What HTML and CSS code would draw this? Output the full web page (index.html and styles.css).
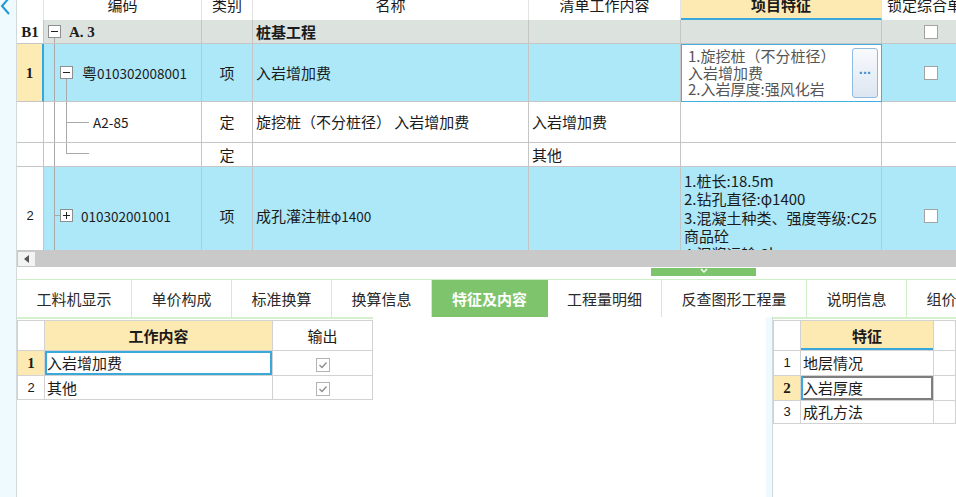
FILE: index.html
```html
<!DOCTYPE html>
<html lang="zh-CN">
<head>
<meta charset="utf-8">
<title>特征及内容</title>
<link rel="stylesheet" href="styles.css">
</head>
<body>
<div class="app">
  <aside class="side">
    <svg class="back" width="12" height="15" viewBox="0 0 12 15"><polyline points="9,-2 2,6 9,14" fill="none" stroke="#1f98d6" stroke-width="2"/></svg>
  </aside>
  <main class="main">
    <section class="sheet">
      <div class="grid">
        <div class="c h"></div>
        <div class="c h">编码</div>
        <div class="c h">类别</div>
        <div class="c h">名称</div>
        <div class="c h">清单工作内容</div>
        <div class="c h hsel">项目特征</div>
        <div class="c h hleft">锁定综合单价</div>

        <div class="c rn rnw serifb">B1</div>
        <div class="c grp t-b1"><span class="tb"></span><span class="serifb">A. 3</span></div>
        <div class="c grp"></div>
        <div class="c grp bold">桩基工程</div>
        <div class="c grp"></div>
        <div class="c grp"></div>
        <div class="c grp ck"><span class="cb"></span></div>

        <div class="c rn cur serifb">1</div>
        <div class="c hi t-1"><span class="tb"></span><span>粤<span class="num">010302008001</span></span></div>
        <div class="c hi ctr">项</div>
        <div class="c hi">入岩增加费</div>
        <div class="c hi"></div>
        <div class="c feat-edit">
          <div class="ftext">1.旋挖桩（不分桩径）<br>入岩增加费<br>2.入岩厚度:强风化岩</div>
          <span class="more">···</span>
        </div>
        <div class="c hi ck"><span class="cb"></span></div>

        <div class="c rn"></div>
        <div class="c t-d1"><span class="num">A2-85</span></div>
        <div class="c ctr">定</div>
        <div class="c">旋挖桩（不分桩径） 入岩增加费</div>
        <div class="c">入岩增加费</div>
        <div class="c"></div>
        <div class="c"></div>

        <div class="c rn"></div>
        <div class="c t-d2"></div>
        <div class="c ctr">定</div>
        <div class="c"></div>
        <div class="c">其他</div>
        <div class="c"></div>
        <div class="c"></div>

        <div class="c rn sans">2</div>
        <div class="c hi t-2"><span class="tb plus"></span><span class="num">010302001001</span></div>
        <div class="c hi ctr">项</div>
        <div class="c hi">成孔灌注桩<span class="num">φ1400</span></div>
        <div class="c hi"></div>
        <div class="c hi feat2">1.桩长:18.5m<br>2.钻孔直径:φ1400<br>3.混凝土种类、强度等级:C25<br>商品砼<br>4.泥浆运输:3km</div>
        <div class="c hi ck"><span class="cb"></span></div>
      </div>
      <div class="hscroll"><span class="sbtn"></span></div>
    </section>

    <div class="hsplit">
      <span class="handle"><svg width="10" height="6" viewBox="0 0 10 6"><polyline points="2,1 5,4 8,1" fill="none" stroke="#fff" stroke-width="1.4"/></svg></span>
    </div>

    <nav class="tabs">
      <span class="tab w115">工料机显示</span>
      <span class="tab w100">单价构成</span>
      <span class="tab w100">标准换算</span>
      <span class="tab w100">换算信息</span>
      <span class="tab w116 on">特征及内容</span>
      <span class="tab w114">工程量明细</span>
      <span class="tab w145">反查图形工程量</span>
      <span class="tab w100">说明信息</span>
      <span class="tab w100">组价方案</span>
    </nav>

    <section class="bottom">
      <div class="pane-l">
        <div class="twrap lw">
          <table class="tbl">
            <colgroup><col class="c27"><col class="c228"><col></colgroup>
            <tr class="th">
              <td></td>
              <td class="yel bold ctr">工作内容</td>
              <td class="ctr">输出</td>
            </tr>
            <tr class="r25">
              <td class="rnum yel serifb">1</td>
              <td class="edit">入岩增加费</td>
              <td class="ctr"><span class="chk"><svg width="12" height="12" viewBox="0 0 12 12"><polyline points="2.5,6 5,8.5 9.5,3.5" fill="none" stroke="#8c8c8c" stroke-width="1.3"/></svg></span></td>
            </tr>
            <tr class="r24">
              <td class="rnum sans">2</td>
              <td>其他</td>
              <td class="ctr"><span class="chk"><svg width="12" height="12" viewBox="0 0 12 12"><polyline points="2.5,6 5,8.5 9.5,3.5" fill="none" stroke="#8c8c8c" stroke-width="1.3"/></svg></span></td>
            </tr>
          </table>
        </div>
      </div>
      <div class="vsplit"></div>
      <div class="pane-r">
        <div class="twrap">
          <table class="tbl rtbl">
            <colgroup><col class="c27"><col class="c133"><col></colgroup>
            <tr class="th">
              <td></td>
              <td class="yel bold ctr bluebot">特征</td>
              <td></td>
            </tr>
            <tr class="r25">
              <td class="rnum sans">1</td>
              <td>地层情况</td>
              <td></td>
            </tr>
            <tr class="r25">
              <td class="rnum yel serifb">2</td>
              <td class="edit2">入岩厚度</td>
              <td></td>
            </tr>
            <tr class="r23">
              <td class="rnum sans">3</td>
              <td>成孔方法</td>
              <td></td>
            </tr>
          </table>
        </div>
      </div>
    </section>
  </main>
</div>
</body>
</html>
```

FILE: styles.css
```css
* { box-sizing: border-box; }
html, body { margin: 0; padding: 0; }
body {
  width: 956px;
  height: 497px;
  overflow: hidden;
  background: #fff;
  font-family: "Noto Sans CJK SC", "Noto Sans", sans-serif;
  font-size: 15px;
  color: #1b1b1b;
}
.app { display: flex; height: 497px; }
.side {
  width: 17px;
  flex: none;
  background: #eefafd;
  border-right: 1px solid #d3d9d9;
}
.back { display: block; }
.main {
  flex: 1;
  min-width: 0;
  display: flex;
  flex-direction: column;
  overflow: hidden;
}

/* ---------- main sheet ---------- */
.sheet { flex: none; overflow: hidden; }
.grid {
  display: grid;
  grid-template-columns: 27px 158px 51px 276px 152px 201px 110px;
  grid-template-rows: 20px 24px 58px 41px 24px 98px;
  width: max-content;
  height: 250px;
  overflow: hidden;
}
.c {
  display: flex;
  align-items: center;
  padding: 0 3px;
  border-right: 1px solid #c5c5c5;
  border-bottom: 1px solid #c5c5c5;
  white-space: nowrap;
  overflow: hidden;
  line-height: 18px;
  background-repeat: no-repeat;
}
.h {
  border-bottom: none;
  border-right-color: #e3e3e3;
  align-items: flex-end;
  justify-content: center;
  padding-bottom: 8px;
  line-height: 15px;
  background: #fff;
}
.hsel {
  background: #fde9b2;
  border-bottom: 2px solid #38a7da;
  padding-bottom: 6px;
  font-weight: bold;
}
.hleft { justify-content: flex-start; padding-left: 5px; }
.bold { font-weight: bold; }
.ctr { justify-content: center; }
.grp { background-color: #dce3df; }
.hi { background-color: #ade8f8; }
.rn { justify-content: center; padding: 0; background: #fff; }
.rn.cur { background: #fdebb4; border-right: 2px solid #34a8dc; }
.serifb { font-family: "Liberation Serif", serif; font-weight: bold; font-size: 15px; }
.sans { font-family: "Liberation Sans", sans-serif; font-size: 13px; }
.num { font-size: 13.5px; }

/* tree boxes and connector lines */
.tb {
  flex: none;
  position: relative;
  width: 13px;
  height: 13px;
  border: 1px solid #8e8e8e;
  background: #fff;
}
.tb::before {
  content: "";
  position: absolute;
  left: 2px;
  right: 2px;
  top: 5px;
  height: 1px;
  background: #222;
}
.tb.plus::after {
  content: "";
  position: absolute;
  top: 2px;
  bottom: 2px;
  left: 5px;
  width: 1px;
  background: #222;
}
.t-b1 {
  padding-left: 4px;
  gap: 8px;
  background-image: linear-gradient(#a9a9a9, #a9a9a9);
  background-position: 10px 18px;
  background-size: 1px 10px;
}
.t-1 {
  padding-left: 16px;
  gap: 9px;
  background-image: linear-gradient(#a9a9a9, #a9a9a9), linear-gradient(#a9a9a9, #a9a9a9);
  background-position: 10px 0, 22px 35px;
  background-size: 1px 100%, 1px 30px;
}
.t-d1 {
  padding-left: 49px;
  background-image: linear-gradient(#a9a9a9, #a9a9a9), linear-gradient(#a9a9a9, #a9a9a9), linear-gradient(#a9a9a9, #a9a9a9);
  background-position: 10px 0, 22px 0, 22px 20px;
  background-size: 1px 100%, 1px 100%, 23px 1px;
}
.t-d2 {
  background-image: linear-gradient(#a9a9a9, #a9a9a9), linear-gradient(#a9a9a9, #a9a9a9), linear-gradient(#a9a9a9, #a9a9a9);
  background-position: 10px 0, 22px 0, 22px 10px;
  background-size: 1px 100%, 1px 10px, 23px 1px;
}
.t-2 {
  padding-left: 16px;
  gap: 8px;
  background-image: linear-gradient(#a9a9a9, #a9a9a9), linear-gradient(#a9a9a9, #a9a9a9);
  background-position: 10px 0, 10px 48px;
  background-size: 1px 100%, 6px 1px;
}

/* feature cells */
.feat-edit {
  background: #fff;
  border: 1px solid #41afe0;
  padding: 0 3px 0 6px;
  justify-content: space-between;
  color: #555;
}
.ftext { line-height: 16.5px; white-space: nowrap; }
.more {
  flex: none;
  width: 26px;
  height: 50px;
  border: 1px solid #8dbbe2;
  border-radius: 3px;
  background: linear-gradient(#f8fafd, #dde6f1);
  color: #3b8fd8;
  display: flex;
  align-items: center;
  justify-content: center;
  font-family: "Liberation Sans", sans-serif;
  font-size: 14px;
  font-weight: bold;
  letter-spacing: -0.5px;
}
.feat2 {
  align-items: flex-start;
  padding-top: 5px;
  line-height: 18.3px;
  display: block;
}
.ck { padding-left: 42px; }
.cb {
  flex: none;
  width: 14px;
  height: 14px;
  border: 1px solid #a3a3a3;
  background: #fff;
}

/* scrollbar */
.hscroll {
  height: 17px;
  background: #c9c9c9;
  display: flex;
  align-items: center;
  padding-left: 1px;
}
.sbtn {
  width: 17px;
  height: 14px;
  background: #f3f3f3;
  display: flex;
  align-items: center;
  justify-content: center;
}
.sbtn::before {
  content: "";
  border-right: 5px solid #555;
  border-top: 4px solid transparent;
  border-bottom: 4px solid transparent;
}

/* splitter */
.hsplit { height: 12px; flex: none; display: flex; align-items: flex-start; }
.handle {
  margin-left: 634px;
  margin-top: 1px;
  width: 105px;
  height: 8px;
  background: #7ec46d;
  display: flex;
  justify-content: center;
  align-items: flex-start;
}
.handle svg { display: block; }

/* tabs */
.tabs {
  flex: none;
  display: flex;
  height: 38px;
  border-top: 1px solid #cdeec6;
  overflow: hidden;
}
.tab {
  flex: none;
  display: flex;
  align-items: center;
  justify-content: center;
  border-right: 1px solid #cdeec6;
  color: #2a2a2a;
  white-space: nowrap;
}
.tab.on { background: #7dc46c; color: #fff; font-weight: bold; border-right-color: #7dc46c; }
.w100 { width: 100px; }
.w114 { width: 114px; }
.w115 { width: 115px; }
.w116 { width: 116px; }
.w145 { width: 145px; }

/* bottom tables */
.bottom { flex: 1; display: flex; min-height: 0; }
.pane-l { flex: 1; }
.vsplit { width: 6px; flex: none; background: #eefafd; }
.pane-r { width: 184px; flex: none; border-left: 1px solid #d3d9d9; }
.twrap { border-top: 2px solid #d3efcb; padding-top: 1px; }
.lw { width: 356px; }
.tbl {
  border-collapse: collapse;
  table-layout: fixed;
  width: 100%;
}
.c27 { width: 27px; }
.c228 { width: 228px; }
.c133 { width: 133px; }
.tbl td {
  border: 1px solid #d2d2d2;
  padding: 0 0 0 2px;
  white-space: nowrap;
  overflow: hidden;
  line-height: 18px;
}
.tbl td.ctr { text-align: center; padding: 0; }
.tbl td.rnum { text-align: center; padding: 0; }
.tbl tr.th td { height: 30px; }
.tbl tr.r25 td { height: 25px; }
.tbl tr.r24 td { height: 24px; }
.tbl tr.r23 td { height: 23px; }
.yel { background: #fdeab2; }
.bluebot { box-shadow: inset 0 -2px 0 #38a7da; }
.edit { box-shadow: inset 0 0 0 2px #3aa8d9; }
.edit2 { box-shadow: inset 2px 0 0 #3aa8d9, inset 0 0 0 2px #7e7e7e; }
.chk {
  display: inline-flex;
  align-items: center;
  justify-content: center;
  width: 14px;
  height: 14px;
  border: 1px solid #b3b3b3;
  background: #fff;
  vertical-align: middle;
}
.chk svg { display: block; }
```
